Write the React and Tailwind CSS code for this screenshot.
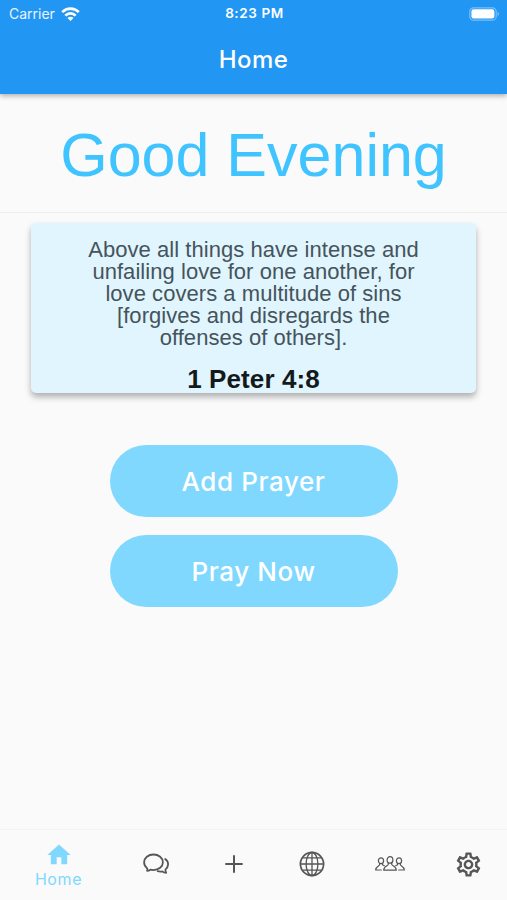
import { MdOutlineSettings } from "react-icons/md";

const stroke = { fill: "none", stroke: "currentColor", strokeLinecap: "round", strokeLinejoin: "round" };

function Wifi() {
  return (
    <svg className="ml-[6px] h-[14px] w-[19px]" viewBox="0 0 19 14" fill="none" stroke="white" strokeWidth="2.7">
      <path d="M1.200 5.100a11.800 11.800 0 0 1 16.600 0" />
      <path d="M4.300 8.600a7.400 7.400 0 0 1 10.400 0" />
      <path d="M9.500 14 6.500 11a4.250 4.250 0 0 1 6 0Z" fill="white" stroke="none" />
    </svg>
  );
}

function Battery() {
  return (
    <svg className="h-[14px] w-[31px]" viewBox="0 0 31 14">
      <rect x=".8" y=".8" width="26.4" height="12.4" rx="3.8" fill="none" stroke="white" strokeOpacity=".4" strokeWidth="1.2" />
      <rect x="2.4" y="2.300" width="23" height="9.200" rx="2.200" fill="white" />
      <path d="M28.6 4.8v4.4c1.8-.8 1.8-3.6 0-4.4Z" fill="white" fillOpacity=".45" />
    </svg>
  );
}

function Chat() {
  return (
    <svg className="h-[24px] w-[28px]" viewBox="0 0 28 24" {...stroke} strokeWidth="1.8">
      <path d="M5.200 16.400C3.200 14.800 2.100 12.600 2.100 10.300 2.100 6 6.300 2.500 11.500 2.500s9.400 3.500 9.400 7.800-4.200 7.800-9.400 7.800c-1.100 0-2.100-.1-3.100-.4-1 .7-2 1.100-3.300 1.100.3-.8.400-1.600.1-2.400Z" />
      <path d="M23.200 6.900c2 1.400 3 3.300 2.900 5.500-.1 2-1 3.700-2.600 5-.2 1.300 0 2.300.7 3.400-1.600 0-2.800-.5-3.900-1.400-1.500.3-3 .3-4.600-.2" />
    </svg>
  );
}

function Globe() {
  return (
    <svg className="h-[26px] w-[26px]" viewBox="0 0 26 26" {...stroke} strokeWidth="1.300">
      <circle cx="13" cy="13" r="11.600" strokeWidth="1.700" />
      <ellipse cx="13" cy="13" rx="5.900" ry="11.500" />
      <path d="M13 1.500v23M1.500 13h23M4.200 6.800h17.600M4.200 19.200h17.600" />
    </svg>
  );
}

function People() {
  return (
    <svg className="h-[18px] w-[30px]" viewBox="0 0 30 18" {...stroke} strokeWidth="1.200">
      <ellipse cx="15" cy="4.900" rx="2.900" ry="3.300" />
      <path d="M13.300 7.900v1.300c0 1.700-4.600 1.500-4.600 6h12.600c0-4.500-4.600-4.300-4.600-6V7.900" />
      <ellipse cx="6" cy="5.700" rx="2.600" ry="2.900" />
      <ellipse cx="24" cy="5.700" rx="2.600" ry="2.900" />
      <path d="M4.600 8.400v1.300c0 1.300-3.900 1.500-3.900 5.300h5.600M7.400 8.400v1.300l1.900 1M25.400 8.400v1.300c0 1.300 3.900 1.500 3.900 5.300h-5.600M22.600 8.400v1.300l-1.900 1" />
    </svg>
  );
}

function PillButton({ children }) {
  return (
    <button className="flex h-[72px] w-[288px] items-center justify-center rounded-full bg-[#80d8ff] font-[Inter,sans-serif] text-[26px] font-medium tracking-[0.6px] text-white">
      {children}
    </button>
  );
}

export default function App() {
  return (
    <div className="flex h-[900px] w-[507px] flex-col overflow-hidden bg-[#fafafa] font-[Inter,sans-serif]">
      <header className="z-10 h-[94px] shrink-0 bg-[#2196f3] text-white shadow-[0_2px_5px_rgba(0,0,0,0.3)]">
        <div className="grid h-[27px] grid-cols-3 items-center pr-[7px] pl-[9px]">
          <div className="flex items-center text-[14px] text-white/90">
            Carrier
            <Wifi />
          </div>
          <div className="text-center text-[13.5px] font-semibold tracking-[0.6px]">8:23 PM</div>
          <div className="flex justify-end">
            <Battery />
          </div>
        </div>
        <h1 className="pt-[15px] text-center text-[24px] leading-[36px] font-medium tracking-[0.4px]">Home</h1>
      </header>

      <main className="flex flex-1 flex-col items-center">
        <div className="flex h-[119px] w-full items-center justify-center border-b border-[#ededed] pt-[6px] font-['Liberation_Sans',sans-serif] text-[61px] whitespace-nowrap text-[#40c4ff]">
          Good Evening
        </div>
        <section className="mt-[10px] h-[170px] w-[445px] rounded-[5px] bg-[#e1f5fe] pt-[16px] text-center font-['Liberation_Sans',sans-serif] shadow-[0_4px_6px_rgba(0,0,0,0.3)]">
          <p className="text-[22px] leading-[22px] tracking-[0.05px] whitespace-nowrap text-[#45545b]">
            Above all things have intense and
            <br />
            unfailing love for one another, for
            <br />
            love covers a multitude of sins
            <br />
            [forgives and disregards the
            <br />
            offenses of others].
          </p>
          <p className="mt-[15px] text-[26px] leading-[30px] font-bold tracking-[0.1px] text-[#14191c]">1 Peter 4:8</p>
        </section>
        <div className="mt-[52px] flex flex-col gap-[18px]">
          <PillButton>Add Prayer</PillButton>
          <PillButton>Pray Now</PillButton>
        </div>
      </main>

      <nav className="grid h-[71px] shrink-0 grid-cols-[117px_78px_78px_78px_78px_78px] items-center border-t border-[#f3f3f3] pb-[2px] text-[#565656]">
        <div className="flex flex-col items-center pt-[3px] text-[#80d8ff]">
          <svg className="h-[28px] w-[28px]" viewBox="0 0 24 24" fill="currentColor">
            <path d="M10 20v-6h4v6h5v-8h3L12 3 2 12h3v8z" />
          </svg>
          <span className="text-[16px] leading-[21px] tracking-[0.6px]">Home</span>
        </div>
        <div className="flex justify-center"><Chat /></div>
        <div className="flex justify-center">
          <svg className="h-[20px] w-[20px]" viewBox="0 0 20 20" fill="none" stroke="currentColor" strokeWidth="2">
            <path d="M10 1.300v17.400M1.300 10h17.400" />
          </svg>
        </div>
        <div className="flex justify-center"><Globe /></div>
        <div className="flex justify-center"><People /></div>
        <div className="flex justify-center"><MdOutlineSettings className="h-[29px] w-[29px]" /></div>
      </nav>
    </div>
  );
}
